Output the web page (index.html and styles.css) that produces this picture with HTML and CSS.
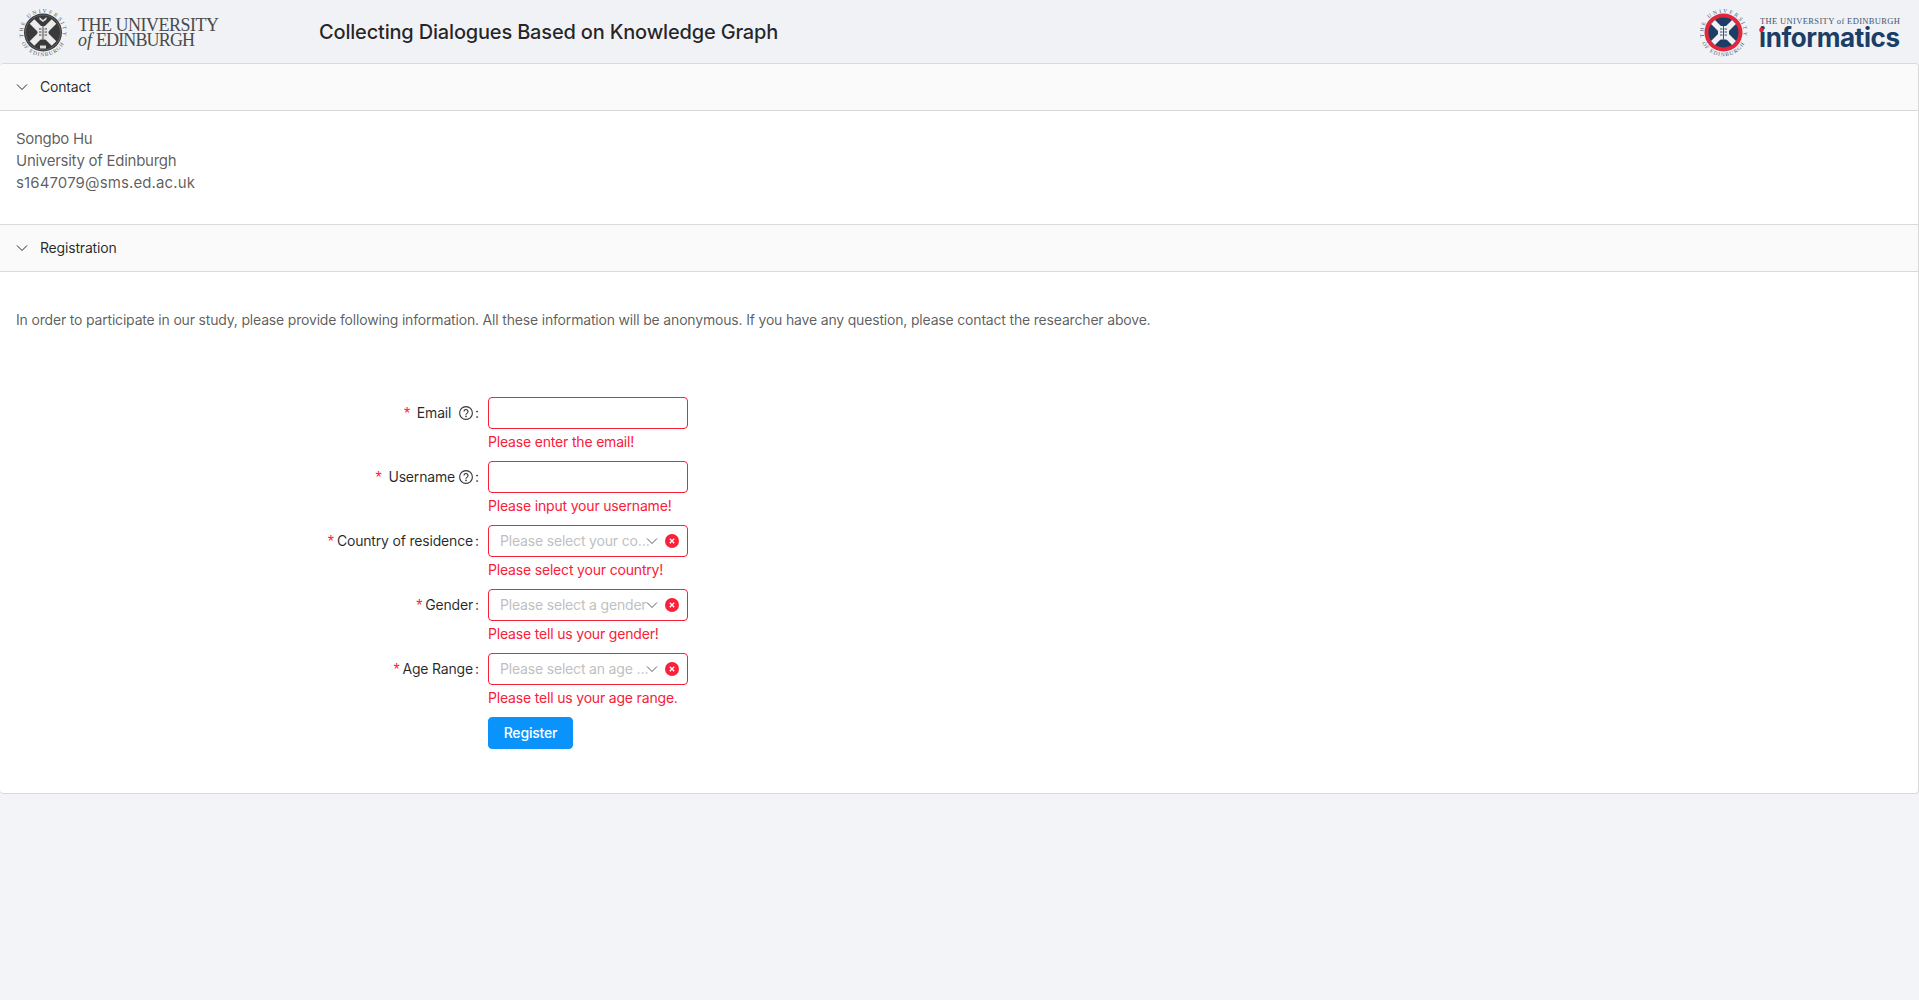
FILE: index.html
```html
<!DOCTYPE html>
<html lang="en">
<head>
<meta charset="utf-8">
<title>Collecting Dialogues Based on Knowledge Graph</title>
<link rel="stylesheet" href="styles.css">
</head>
<body>
<header class="topbar">
  <svg class="logo-uoe" width="225" height="56" viewBox="0 0 225 56" role="img" aria-label="The University of Edinburgh">
    <defs>
      <path id="ringTopA" d="M23.500 33A20 20 0 1 1 62.500 33"/>
      <path id="ringBotA" d="M21.500 39A24 24 0 0 0 64.500 39"/>
    </defs>
    <text class="ring-text ring-grey"><textPath href="#ringTopA" textLength="70">THE UNIVERSITY</textPath></text>
    <text class="ring-text ring-grey"><textPath href="#ringBotA" textLength="52">OF EDINBURGH</textPath></text>
    <circle cx="43" cy="28.500" r="19" fill="#3a3a3c"/>
    <circle cx="43" cy="28.500" r="17.500" fill="none" stroke="#8a8a8a" stroke-width=".5"/>
    <path d="M32 17.500 L54 39.500 M54 17.500 L32 39.500" stroke="#ececec" stroke-width="6.500"/>
    <rect x="37.500" y="22" width="11" height="13.500" fill="#e8e8e8"/>
    <path d="M43 22v13.500M39 25h2.500M39 28h2.500M39 31h2.500M44.500 25h2.500M44.500 28h2.500M44.500 31h2.500" stroke="#333" stroke-width=".9"/>
    <path d="M39.500 13l3.500 3 3.500-3v2.500l-3.500 2.500-3.500-2.500z" fill="#ddd"/>
    <path d="M40 41.500h6v3h-6z" fill="#ddd"/>
    <text class="uoe-1" x="78" y="26.500" textLength="141">THE UNIVERSITY</text>
    <text class="uoe-2" x="78" y="42">of</text>
    <text class="uoe-1" x="96" y="42" textLength="99">EDINBURGH</text>
  </svg>
  <h1 class="title">Collecting Dialogues Based on Knowledge Graph</h1>
  <svg class="logo-inf" width="215" height="56" viewBox="0 0 215 56" role="img" aria-label="The University of Edinburgh Informatics">
    <defs>
      <path id="ringTopB" d="M4 33A20 20 0 1 1 43 33"/>
      <path id="ringBotB" d="M2 39A24 24 0 0 0 45 39"/>
    </defs>
    <text class="ring-text ring-navy"><textPath href="#ringTopB" textLength="70">THE UNIVERSITY</textPath></text>
    <text class="ring-text ring-navy"><textPath href="#ringBotB" textLength="52">OF EDINBURGH</textPath></text>
    <circle cx="23.500" cy="28.500" r="19" fill="#e3263c"/>
    <circle cx="23.500" cy="28.500" r="15" fill="#1c3d66"/>
    <path d="M13 18 L34 39 M34 18 L13 39" stroke="#eef0f4" stroke-width="5.500"/>
    <rect x="18" y="22" width="11" height="13.500" fill="#eef0f4"/>
    <path d="M23.500 22v13.500M20 25h2.500M20 28h2.500M20 31h2.500M24.500 25h2.500M24.500 28h2.500M24.500 31h2.500" stroke="#1c3d66" stroke-width=".9"/>
    <text class="inf-top" x="60" y="19.500" textLength="140">THE UNIVERSITY of EDINBURGH</text>
    <text class="inf-main" x="59" y="42.500" textLength="141">informatics</text>
    <circle cx="61.500" cy="26" r="2.300" fill="#e3263c"/>
  </svg>
</header>

<main class="collapse">
  <section class="panel">
    <div class="panel-head">
      <svg class="chev" viewBox="0 0 12 12" width="12" height="12"><path d="M1 3.500 L6 8.500 L11 3.500" fill="none" stroke="currentColor" stroke-width="1"/></svg>
      <span>Contact</span>
    </div>
    <div class="panel-body contact">
      <div class="c-name">Songbo Hu</div>
      <div class="c-org">University of Edinburgh</div>
      <div class="c-mail">s1647079@sms.ed.ac.uk</div>
    </div>
  </section>
  <section class="panel">
    <div class="panel-head">
      <svg class="chev" viewBox="0 0 12 12" width="12" height="12"><path d="M1 3.500 L6 8.500 L11 3.500" fill="none" stroke="currentColor" stroke-width="1"/></svg>
      <span>Registration</span>
    </div>
    <div class="panel-body registration">
      <p class="intro">In order to participate in our study, please provide following information. All these information will be anonymous. If you have any question, please contact the researcher above.</p>
      <form class="form">
        <div class="row">
          <label class="label"><span class="star">*</span><span>&nbsp;Email&nbsp;</span><svg class="help" viewBox="0 0 14 14" width="14" height="14"><circle cx="7" cy="7" r="6.400" fill="none" stroke="currentColor" stroke-width="1.100"/><path d="M5 5.500a2 2 0 1 1 3.200 1.600c-.8.500-1.200.9-1.200 1.700" fill="none" stroke="currentColor" stroke-width="1.100"/><circle cx="7" cy="10.400" r=".8" fill="currentColor"/></svg><span class="colon">:</span></label>
          <div class="control"><div class="field"></div><div class="error">Please enter the email!</div></div>
        </div>
        <div class="row">
          <label class="label"><span class="star">*</span><span>&nbsp;Username</span><svg class="help" viewBox="0 0 14 14" width="14" height="14"><circle cx="7" cy="7" r="6.400" fill="none" stroke="currentColor" stroke-width="1.100"/><path d="M5 5.500a2 2 0 1 1 3.200 1.600c-.8.500-1.200.9-1.200 1.700" fill="none" stroke="currentColor" stroke-width="1.100"/><circle cx="7" cy="10.400" r=".8" fill="currentColor"/></svg><span class="colon">:</span></label>
          <div class="control"><div class="field"></div><div class="error">Please input your username!</div></div>
        </div>
        <div class="row">
          <label class="label"><span class="star">*</span><span>Country of residence</span><span class="colon">:</span></label>
          <div class="control">
            <div class="field select"><span class="placeholder">Please select your country</span>
              <svg class="arrow" viewBox="0 0 12 12" width="12" height="12"><path d="M1 3.500 L6 8.500 L11 3.500" fill="none" stroke="currentColor" stroke-width="1"/></svg>
              <svg class="clear" viewBox="0 0 14 14" width="14" height="14"><circle cx="7" cy="7" r="7" fill="#f9203a"/><path d="M4.800 4.800l4.400 4.400M9.200 4.800l-4.400 4.400" stroke="#fff" stroke-width="1.300"/></svg>
            </div>
            <div class="error">Please select your country!</div>
          </div>
        </div>
        <div class="row">
          <label class="label"><span class="star">*</span><span>Gender</span><span class="colon">:</span></label>
          <div class="control">
            <div class="field select"><span class="placeholder">Please select a gender</span>
              <svg class="arrow" viewBox="0 0 12 12" width="12" height="12"><path d="M1 3.500 L6 8.500 L11 3.500" fill="none" stroke="currentColor" stroke-width="1"/></svg>
              <svg class="clear" viewBox="0 0 14 14" width="14" height="14"><circle cx="7" cy="7" r="7" fill="#f9203a"/><path d="M4.800 4.800l4.400 4.400M9.200 4.800l-4.400 4.400" stroke="#fff" stroke-width="1.300"/></svg>
            </div>
            <div class="error">Please tell us your gender!</div>
          </div>
        </div>
        <div class="row">
          <label class="label"><span class="star">*</span><span>Age Range</span><span class="colon">:</span></label>
          <div class="control">
            <div class="field select"><span class="placeholder">Please select an age range</span>
              <svg class="arrow" viewBox="0 0 12 12" width="12" height="12"><path d="M1 3.500 L6 8.500 L11 3.500" fill="none" stroke="currentColor" stroke-width="1"/></svg>
              <svg class="clear" viewBox="0 0 14 14" width="14" height="14"><circle cx="7" cy="7" r="7" fill="#f9203a"/><path d="M4.800 4.800l4.400 4.400M9.200 4.800l-4.400 4.400" stroke="#fff" stroke-width="1.300"/></svg>
            </div>
            <div class="error">Please tell us your age range.</div>
          </div>
        </div>
        <div class="row row-submit">
          <div class="control"><button type="button" class="btn">Register</button></div>
        </div>
      </form>
    </div>
  </section>
</main>
</body>
</html>
```
FILE: styles.css
```css
* { box-sizing: border-box; }
html, body { margin: 0; height: 100%; }
body {
  background: #f2f4f8;
  color: rgba(0, 0, 0, .65);
  font: 14px/22px Inter, "Liberation Sans", sans-serif;
  letter-spacing: -.18px;
}
.topbar {
  height: 63px;
  display: flex;
  align-items: center;
  background: #f0f2f6;
}
.logo-uoe { flex: none; margin-right: 94px; }
.logo-inf { flex: none; margin-left: auto; margin-right: 4px; }
.ring-text { font: 5.500px "Liberation Serif", serif; letter-spacing: 0; }
.ring-grey { fill: #555; }
.ring-navy { fill: #3d5670; }
.uoe-1 { font: 18px "Liberation Serif", serif; fill: #4a4a4a; letter-spacing: 0; }
.uoe-2 { font: italic 18px "Liberation Serif", serif; fill: #4a4a4a; letter-spacing: 0; }
.inf-top { font: 8.500px "Liberation Serif", serif; fill: #3d5670; letter-spacing: 0; }
.inf-main { font: 700 26px Inter, "Liberation Sans", sans-serif; fill: #1c3d66; letter-spacing: 0; }
.title {
  margin: 0;
  font-size: 20px;
  font-weight: 500;
  line-height: 28px;
  color: rgba(0, 0, 0, .85);
}
.collapse {
  background: #fff;
  border: 1px solid #d9d9d9;
  border-left: 0;
  border-radius: 4px;
  overflow: hidden;
}
.panel + .panel { border-top: 1px solid #d9d9d9; }
.panel-head {
  height: 47px;
  background: #fafafa;
  border-bottom: 1px solid #d9d9d9;
  display: flex;
  align-items: center;
  padding-left: 16px;
  color: rgba(0, 0, 0, .85);
  gap: 12px;
}
.chev { flex: none; }
.panel-body { padding: 16px; }
.panel-body p { margin: 0; }
.contact { height: 113px; padding-top: 17px; font-size: 15px; }
.c-name { letter-spacing: -.3px; }
.c-org { letter-spacing: -.27px; }
.c-mail { letter-spacing: .12px; }
.registration { height: 521px; }
.intro { margin-top: 21px !important; margin-bottom: 66px !important; }
.form { display: flex; flex-direction: column; }
.row { display: flex; gap: 8px; height: 64px; }
.label {
  width: 464px;
  height: 32px;
  display: flex;
  align-items: center;
  justify-content: flex-end;
  color: rgba(0, 0, 0, .85);
}
.star {
  color: #f9203a;
  margin-right: 3px;
  font: 16px/22px "Liberation Sans", sans-serif;
  padding-top: 2px;
}
.help { margin-left: 4px; color: rgba(0, 0, 0, .8); flex: none; }
.colon { margin-left: 2px; width: 5px; }
.control { width: 200px; }
.row-submit { padding-left: 472px; }
.field {
  height: 32px;
  width: 200px;
  background: #fff;
  border: 1px solid #f9203a;
  border-radius: 4px;
}
.select {
  display: flex;
  align-items: center;
  padding-left: 11px;
}
.placeholder {
  width: 151px;
  flex: none;
  color: #bfbfbf;
  white-space: nowrap;
  overflow: hidden;
  text-overflow: ellipsis;
}
.arrow { flex: none; color: rgba(0, 0, 0, .65); margin-left: -5px; }
.clear { flex: none; margin-left: 7px; }
.error { color: #f9203a; line-height: 22px; margin-top: 2px; white-space: nowrap; }
.btn {
  height: 32px;
  width: 85px;
  padding: 0;
  border: 1px solid #0a94fb;
  border-radius: 4px;
  background: #0a94fb;
  color: #fff;
  font: inherit;
  font-weight: 500;
  letter-spacing: inherit;
}
```
